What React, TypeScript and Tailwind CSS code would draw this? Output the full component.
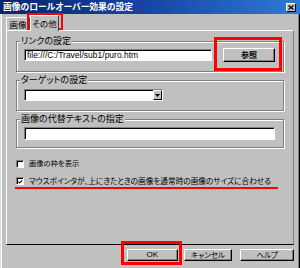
import React from "react";

function Group({ label, children, className }: { label: string; children: React.ReactNode; className: string }) {
  return (
    <div className={"relative border border-[#808080] shadow-[1px_1px_0_#ffffff,inset_1px_1px_0_#ffffff] " + className}>
      <span className="absolute left-[3px] top-[-6px] bg-[#c0c0c0] px-[1px] text-[9px] leading-[10px] whitespace-nowrap [font-feature-settings:'palt']">
        {label}
      </span>
      {children}
    </div>
  );
}

function Checkbox({ checked }: { checked?: boolean }) {
  return (
    <div className="flex h-[8px] w-[8px] shrink-0 items-center justify-center border border-t-[#808080] border-l-[#808080] border-r-white border-b-white bg-white shadow-[inset_1px_1px_0_#000000]">
      {checked ? (
        <svg width="6" height="6" viewBox="0 0 6 6" className="ml-[1px] mt-[1px]">
          <path d="M0.5 2.5 L2 4 L5 1" stroke="#000" strokeWidth="1.3" fill="none" />
        </svg>
      ) : null}
    </div>
  );
}

export default function App() {
  return (
    <div className="relative h-[268px] w-[300px] overflow-hidden bg-[#c0c0c0] font-['Noto_Sans_CJK_JP',sans-serif] leading-none text-black shadow-[inset_1px_0_0_#dfdfdf,inset_2px_0_0_#ffffff,inset_-1px_0_0_#000000,inset_-2px_0_0_#808080]">
      {/* Title bar */}
      <div className="flex h-[14px] items-center bg-linear-to-r from-[#0a246a] via-[#1846a6] to-[#2f7ad6] pl-[3px] pr-[4px]">
        <span className="text-[8.8px] font-bold text-white [font-feature-settings:'palt'] whitespace-nowrap">
          画像のロールオーバー効果の設定
        </span>
        <div className="ml-auto flex h-[9px] w-[10px] items-center justify-center border border-t-white border-l-white border-r-black border-b-black bg-[#c0c0c0]">
          <svg width="6" height="5" viewBox="0 0 6 5">
            <path d="M0.5 0.5 L5.5 4.5 M5.5 0.5 L0.5 4.5" stroke="#000" strokeWidth="1.2" />
          </svg>
        </div>
      </div>

      {/* Body */}
      <div className="flex flex-col pl-[6px] pr-[6px]">
        {/* Tabs */}
        <div className="flex h-[16px] items-end">
          <div className="flex h-[13px] w-[24px] items-center justify-center border-t border-l border-r border-t-white border-l-white border-r-[#404040] text-[8.5px] [font-feature-settings:'palt']">
            画像
          </div>
          <div className="relative z-10 mb-[-1px] flex h-[16px] w-[29px] items-center justify-center border-t border-l border-r border-t-white border-l-white border-r-[#404040] bg-[#c0c0c0] pb-[1px] text-[8.5px] [font-feature-settings:'palt']">
            その他
          </div>
        </div>

        {/* Panel */}
        <div className="flex h-[215px] flex-col border border-t-white border-l-white border-r-[#808080] border-b-black pl-[9px] pr-[9px]">
          <Group label="リンクの設定" className="mt-[10px] flex items-center pt-[6px] pb-[9px] pl-[7px]">
            <div className="flex h-[12px] w-[188px] items-center border border-t-[#808080] border-l-[#808080] border-r-white border-b-white bg-white pl-[2px] shadow-[inset_1px_1px_0_#000000] font-['Liberation_Sans',sans-serif] text-[8.5px] whitespace-nowrap">
              file:///C:/Travel/sub1/puro.htm
            </div>
            <div className="ml-[11px] flex h-[14px] w-[52px] items-center justify-center border border-t-white border-l-white border-r-black border-b-black text-[8px] font-bold shadow-[inset_-1px_-1px_0_#808080]">
              参照
            </div>
          </Group>

          <Group label="ターゲットの設定" className="mt-[8px] flex items-center pt-[8px] pb-[9px] pl-[7px]">
            <div className="flex h-[12px] w-[139px] items-center justify-end border border-t-[#808080] border-l-[#808080] border-r-white border-b-white bg-white shadow-[inset_1px_1px_0_#000000]">
              <div className="flex h-[10px] w-[9px] items-center justify-center border border-t-white border-l-white border-r-black border-b-black bg-[#c0c0c0]">
                <svg width="5" height="3" viewBox="0 0 5 3">
                  <path d="M0 0 H5 L2.5 3 Z" fill="#000" />
                </svg>
              </div>
            </div>
          </Group>

          <Group label="画像の代替テキストの指定" className="mt-[8px] flex items-center pt-[7px] pb-[7px] pl-[7px]">
            <div className="h-[13px] w-[251px] border border-t-[#808080] border-l-[#808080] border-r-white border-b-white bg-white shadow-[inset_1px_1px_0_#000000]" />
          </Group>

          <div className="mt-[11px] flex h-[10px] items-center">
            <Checkbox />
            <span className="ml-[5px] text-[7.3px] whitespace-nowrap [font-feature-settings:'palt']">画像の枠を表示</span>
          </div>
          <div className="mt-[7px] flex h-[10px] items-center">
            <Checkbox checked />
            <span className="ml-[5px] text-[7.65px] whitespace-nowrap [font-feature-settings:'palt']">
              マウスポインタが、上にきたときの画像を通常時の画像のサイズに合わせる
            </span>
          </div>
        </div>

        {/* Buttons */}
        <div className="mt-[4px] flex h-[12px]">
          <div className="ml-[121px] flex h-[12px] w-[51px] items-center justify-center border border-t-white border-l-white border-r-black border-b-black font-['Liberation_Sans',sans-serif] text-[8px] shadow-[inset_-1px_-1px_0_#808080]">
            OK
          </div>
          <div className="ml-[6px] flex h-[12px] w-[49px] items-center justify-center border border-t-white border-l-white border-r-black border-b-black text-[7.5px] shadow-[inset_-1px_-1px_0_#808080] [font-feature-settings:'palt']">
            キャンセル
          </div>
          <div className="ml-[8px] flex h-[12px] w-[54px] items-center justify-center border border-t-white border-l-white border-r-black border-b-black text-[7.5px] shadow-[inset_-1px_-1px_0_#808080] [font-feature-settings:'palt']">
            ヘルプ
          </div>
        </div>
      </div>

      {/* Red annotations */}
      <div className="pointer-events-none absolute left-[27px] top-[13px] h-[17px] w-[36px] border-2 border-[#ff0000]" />
      <div className="pointer-events-none absolute left-[214px] top-[37px] h-[34px] w-[68px] border-[3px] border-[#ff0000]" />
      <div className="pointer-events-none absolute left-[121px] top-[241px] h-[24px] w-[61px] border-[3px] border-[#ff0000]" />
      <div className="pointer-events-none absolute left-[15px] top-[187px] h-[2px] w-[263px] bg-[#ff0000]" />
    </div>
  );
}
